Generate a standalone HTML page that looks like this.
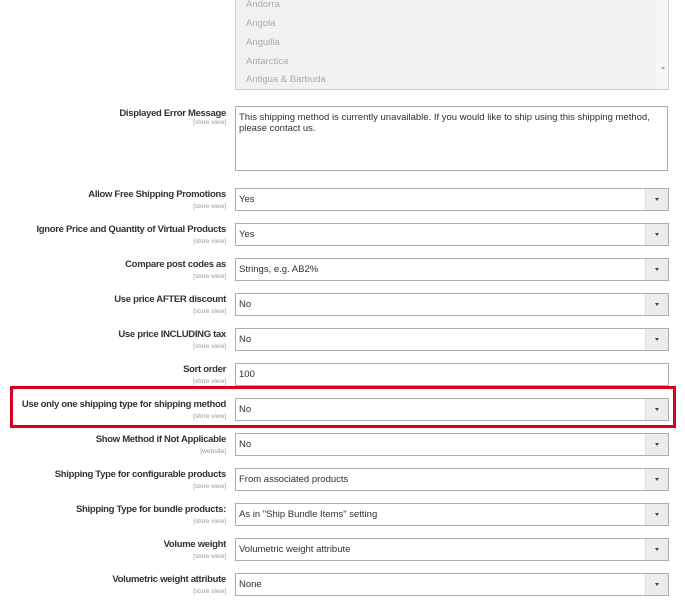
<!DOCTYPE html>
<html><head><style>
body{margin:0;width:685px;height:614px;background:#fff;font-family:"Liberation Sans",sans-serif;position:relative;overflow:hidden}
.lbl{position:absolute;right:459px;text-align:right;font-size:9.5px;font-weight:bold;color:#333;white-space:nowrap;letter-spacing:-0.3px}
.sc{position:absolute;right:459px;text-align:right;font-size:6.5px;color:#999;white-space:nowrap}
.sel{position:absolute;left:235px;width:432px;height:21px;border:1px solid #adadad;background:#fff;font-size:9.5px;color:#303030;line-height:21px;box-sizing:content-box}
.sel span{padding-left:3px}
.sel .ar{position:absolute;right:0;top:0;width:22px;height:21px;background:#ececec;border-left:1px solid #ddd}
.sel .ar:after{content:"";position:absolute;left:9px;top:9px;border-left:2.5px solid transparent;border-right:2.5px solid transparent;border-top:3px solid #444}
</style></head><body>
<div style="position:absolute;left:235px;top:-2px;width:432px;height:90px;border:1px solid #cfcfcf;background:#f2f2f2;font-size:9.5px;color:#aaa">
<div style="position:absolute;left:10px;top:0">Andorra</div>
<div style="position:absolute;left:10px;top:19px">Angola</div>
<div style="position:absolute;left:10px;top:38px">Anguilla</div>
<div style="position:absolute;left:10px;top:57px">Antarctica</div>
<div style="position:absolute;left:10px;top:75px">Antigua &amp; Barbuda</div>
<div style="position:absolute;right:0;top:0;width:12px;height:90px;background:#f7f7f7"></div>
<div style="position:absolute;right:3px;top:68px;border-left:2.5px solid transparent;border-right:2.5px solid transparent;border-top:3px solid #aaa"></div>
</div>
<div class="lbl" style="top:108px">Displayed Error Message</div><div class="sc" style="top:119px">[store view]</div>
<div style="position:absolute;left:235px;top:106px;width:433px;height:65px;border:1px solid #adadad;font-size:9.5px;color:#303030;line-height:11px;padding:0 0 0 3px;box-sizing:border-box;padding-top:5px">This shipping method is currently unavailable. If you would like to ship using this shipping method, please contact us.</div>

<div class="lbl" style="top:189px">Allow Free Shipping Promotions</div><div class="sc" style="top:203px">[store view]</div>
<div class="sel" style="top:188px"><span>Yes</span><div class="ar"></div></div>
<div class="lbl" style="top:224px">Ignore Price and Quantity of Virtual Products</div><div class="sc" style="top:238px">[store view]</div>
<div class="sel" style="top:223px"><span>Yes</span><div class="ar"></div></div>
<div class="lbl" style="top:259px">Compare post codes as</div><div class="sc" style="top:273px">[store view]</div>
<div class="sel" style="top:258px"><span>Strings, e.g. AB2%</span><div class="ar"></div></div>
<div class="lbl" style="top:294px">Use price AFTER discount</div><div class="sc" style="top:308px">[store view]</div>
<div class="sel" style="top:293px"><span>No</span><div class="ar"></div></div>
<div class="lbl" style="top:329px">Use price INCLUDING tax</div><div class="sc" style="top:343px">[store view]</div>
<div class="sel" style="top:328px"><span>No</span><div class="ar"></div></div>
<div class="lbl" style="top:364px">Sort order</div><div class="sc" style="top:378px">[store view]</div>
<div class="sel" style="top:363px"><span>100</span></div>
<div style="position:absolute;left:10px;top:386px;width:660px;height:36px;border:3px solid #d9001b"></div>
<div class="lbl" style="top:399px">Use only one shipping type for shipping method</div><div class="sc" style="top:413px">[store view]</div>
<div class="sel" style="top:398px"><span>No</span><div class="ar"></div></div>
<div class="lbl" style="top:434px">Show Method if Not Applicable</div><div class="sc" style="top:448px">[website]</div>
<div class="sel" style="top:433px"><span>No</span><div class="ar"></div></div>
<div class="lbl" style="top:469px">Shipping Type for configurable products</div><div class="sc" style="top:483px">[store view]</div>
<div class="sel" style="top:468px"><span>From associated products</span><div class="ar"></div></div>
<div class="lbl" style="top:504px">Shipping Type for bundle products:</div><div class="sc" style="top:518px">[store view]</div>
<div class="sel" style="top:503px"><span>As in "Ship Bundle Items" setting</span><div class="ar"></div></div>
<div class="lbl" style="top:539px">Volume weight</div><div class="sc" style="top:553px">[store view]</div>
<div class="sel" style="top:538px"><span>Volumetric weight attribute</span><div class="ar"></div></div>
<div class="lbl" style="top:574px">Volumetric weight attribute</div><div class="sc" style="top:588px">[store view]</div>
<div class="sel" style="top:573px"><span>None</span><div class="ar"></div></div>
</body></html>
